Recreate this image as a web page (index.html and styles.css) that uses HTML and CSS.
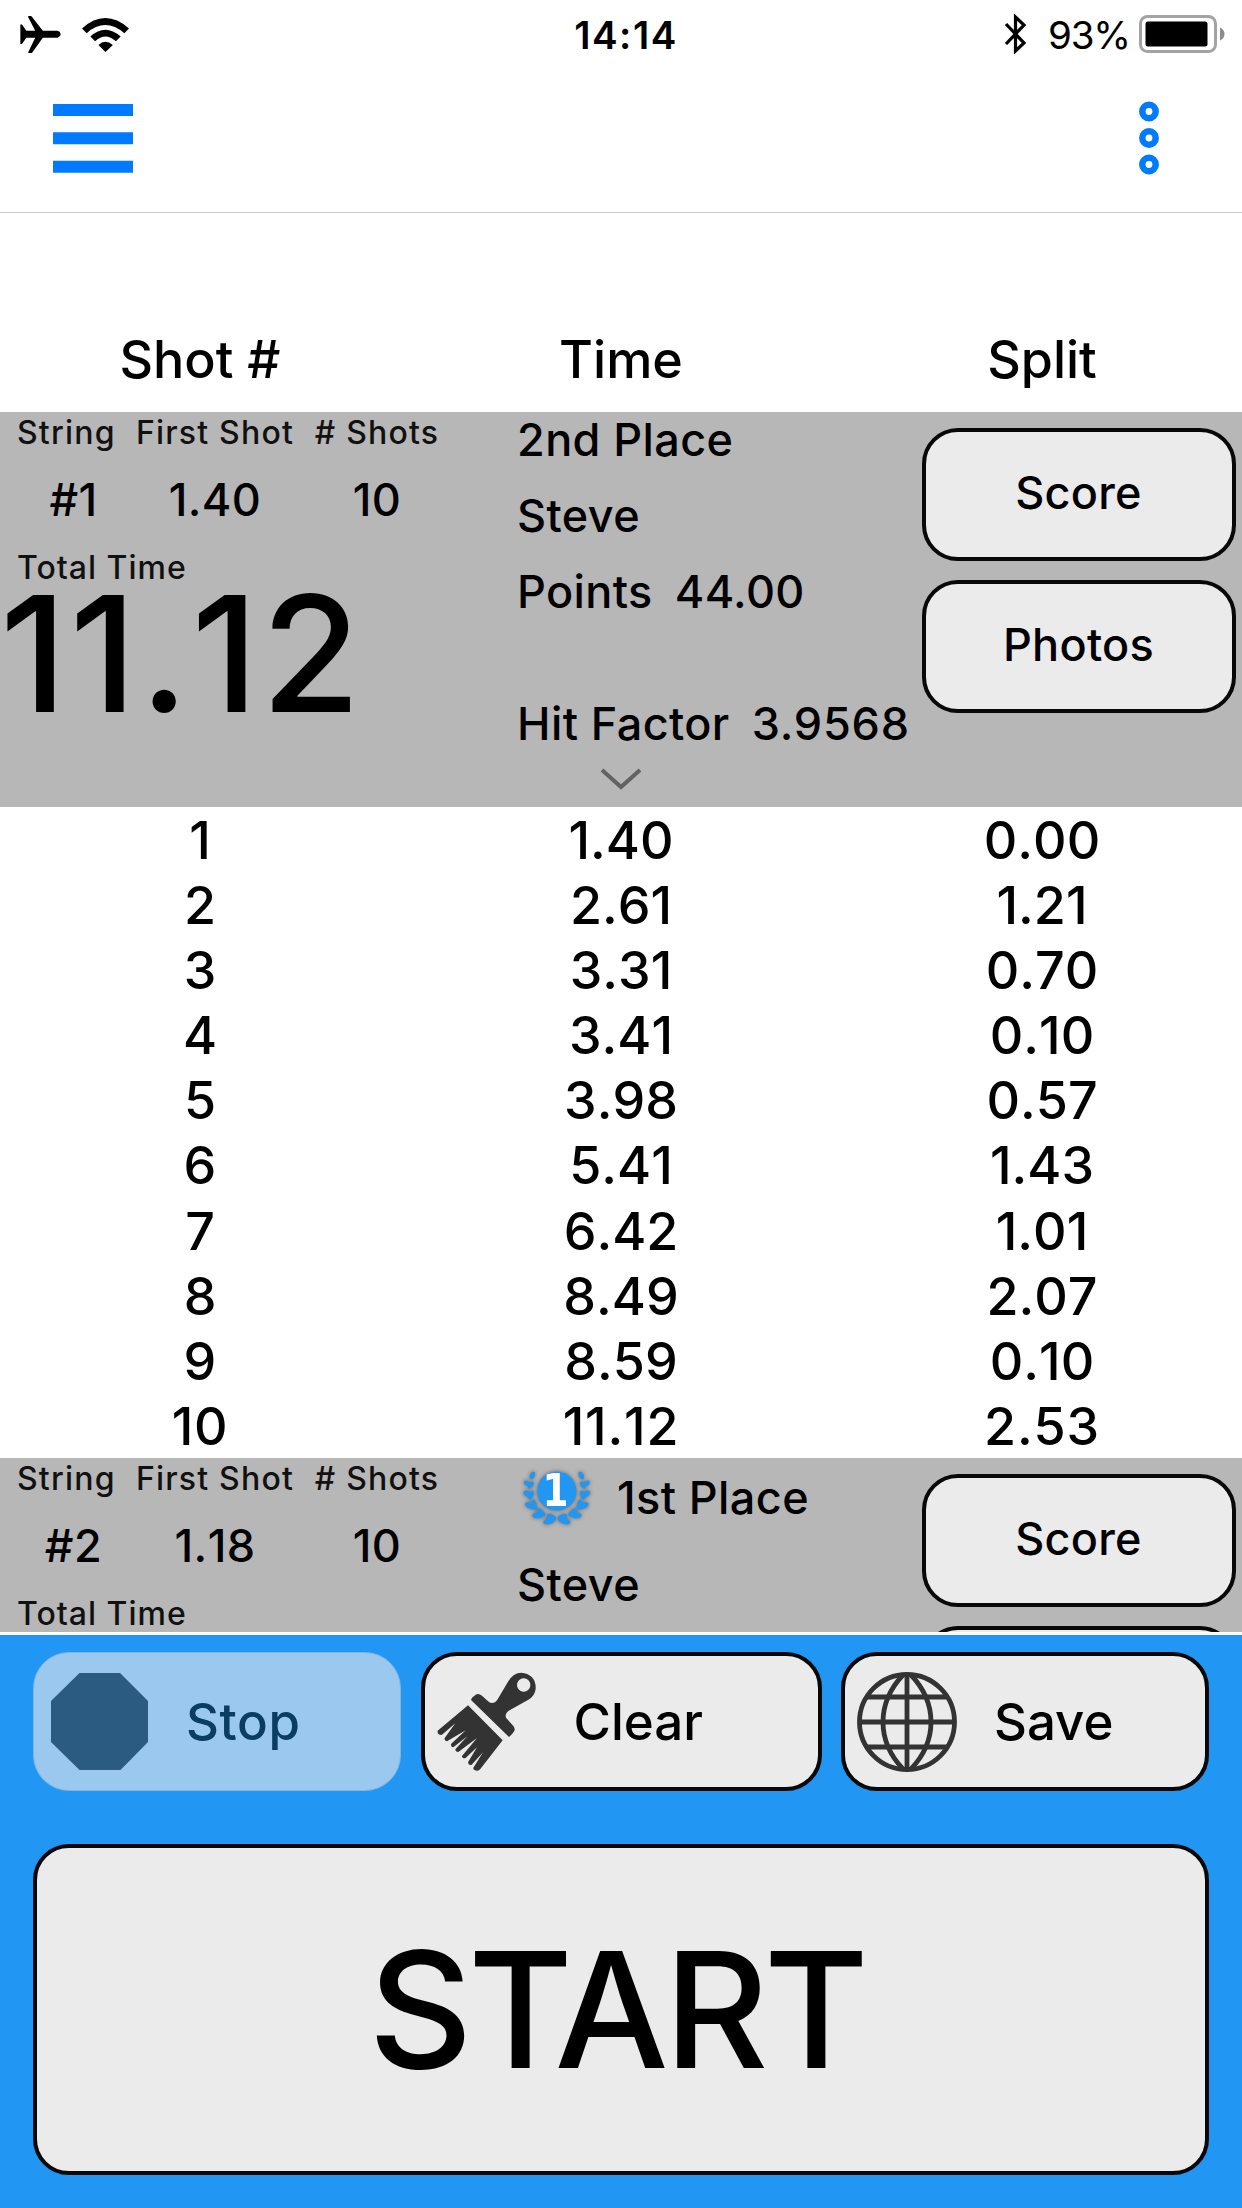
FILE: index.html
```html
<!DOCTYPE html>
<html lang="en">
<head>
  <meta charset="UTF-8">
  <title>Shot Timer</title>
  <link rel="stylesheet" href="styles.css">
</head>
<body>
  <div class="status-bar">
    <div class="status-left">
      <svg class="plane-icon" viewBox="60 44 122 112"><path d="M60 70h5l13 19h27L83 46q0-2 3-2h7l35 45h45q9 3 9 10.500t-9 10.500h-45l-33 46h-9q-3 0-2-3l21-43H78l-13 19h-5z"/></svg>
      <svg class="wifi-icon" viewBox="248 46 140 104"><path d="M248 80Q317 18 388 80L374 94Q317 46 262 94zM273 104Q317 64 363 104L349 118Q317 90 287 118zM297 129Q317 110 340 129L318 150z"/></svg>
    </div>
    <div class="clock">14:14</div>
    <div class="status-right">
      <svg class="bluetooth-icon" viewBox="0 0 23 40"><path d="M2 10L20 29L11.500 37V3L20 11L2 30" fill="none" stroke="#000" stroke-width="3.200"/></svg>
      <span class="percent">93%</span>
      <svg class="battery-icon" viewBox="0 0 87 38"><rect x="1.500" y="1.500" width="75" height="35" rx="7" fill="none" stroke="#a3a3a3" stroke-width="3"/><rect x="6.500" y="6.500" width="62" height="25" rx="2.500"/><path d="M81 12.500q4.500 2 4.500 6.500t-4.500 6.500z" fill="#8c8c8c"/></svg>
    </div>
  </div>

  <div class="nav-bar">
    <svg class="menu-icon" viewBox="0 0 80 69"><path d="M0 0h80v12H0zM0 28.300h80v12H0zM0 56.700h80v12H0z"/></svg>
    <svg class="more-icon" viewBox="0 0 20 74"><circle cx="10" cy="10.500" r="6.700"/><circle cx="10" cy="37" r="6.700"/><circle cx="10" cy="63.500" r="6.700"/></svg>
  </div>

  <div class="row table-head">
    <div>Shot #</div><div>Time</div><div>Split</div>
  </div>

  <div class="list">
    <div class="string-card">
      <div class="summary">
        <div class="summary-grid">
          <div class="label first">String</div><div class="label">First Shot</div><div class="label"># Shots</div>
          <div class="value">#1</div><div class="value">1.40</div><div class="value">10</div>
        </div>
        <div class="label total-label">Total Time</div>
        <div class="total">11.12</div>
      </div>
      <div class="score-info">
        <div class="info-line">2nd Place</div>
        <div class="info-line">Steve</div>
        <div class="info-line">Points<span class="num">44.00</span></div>
        <div class="info-line hit">Hit Factor<span class="num">3.9568</span></div>
        <svg class="chevron" viewBox="0 0 42 22"><path d="M2 2L21 19L40 2" fill="none" stroke="#626262" stroke-width="4"/></svg>
      </div>
      <div class="card-buttons">
        <button>Score</button>
        <button>Photos</button>
      </div>
    </div>

    <div class="shots">
      <div class="row"><div>1</div><div>1.40</div><div>0.00</div></div>
      <div class="row"><div>2</div><div>2.61</div><div>1.21</div></div>
      <div class="row"><div>3</div><div>3.31</div><div>0.70</div></div>
      <div class="row"><div>4</div><div>3.41</div><div>0.10</div></div>
      <div class="row"><div>5</div><div>3.98</div><div>0.57</div></div>
      <div class="row"><div>6</div><div>5.41</div><div>1.43</div></div>
      <div class="row"><div>7</div><div>6.42</div><div>1.01</div></div>
      <div class="row"><div>8</div><div>8.49</div><div>2.07</div></div>
      <div class="row"><div>9</div><div>8.59</div><div>0.10</div></div>
      <div class="row last"><div>10</div><div>11.12</div><div>2.53</div></div>
    </div>

    <div class="string-card">
      <div class="summary">
        <div class="summary-grid">
          <div class="label first">String</div><div class="label">First Shot</div><div class="label"># Shots</div>
          <div class="value">#2</div><div class="value">1.18</div><div class="value">10</div>
        </div>
        <div class="label total-label">Total Time</div>
      </div>
      <div class="score-info">
        <div class="info-line winner">
          <svg class="badge" viewBox="366 88 210 170">
            <defs>
              <g id="laurel">
                <ellipse cx="397" cy="107" rx="7" ry="12" transform="rotate(25 397 107)"/>
                <ellipse cx="383" cy="132" rx="7" ry="13" transform="rotate(-55 383 132)"/>
                <ellipse cx="393" cy="136" rx="6" ry="12" transform="rotate(35 393 136)"/>
                <ellipse cx="384" cy="163" rx="8" ry="15" transform="rotate(-60 384 163)"/>
                <ellipse cx="393" cy="166" rx="7" ry="14" transform="rotate(20 393 166)"/>
                <ellipse cx="392" cy="198" rx="9" ry="18" transform="rotate(-68 392 198)"/>
                <ellipse cx="403" cy="194" rx="7" ry="15" transform="rotate(-15 403 194)"/>
                <ellipse cx="415" cy="226" rx="9" ry="19" transform="rotate(-96 415 226)"/>
                <ellipse cx="423" cy="217" rx="7" ry="16" transform="rotate(-48 423 217)"/>
                <ellipse cx="448" cy="243" rx="9" ry="19" transform="rotate(-108 448 243)"/>
                <ellipse cx="454" cy="232" rx="8" ry="15" transform="rotate(-65 454 232)"/>
              </g>
            </defs>
            <g fill="#2196f3">
              <use href="#laurel"/>
              <use href="#laurel" transform="translate(941 0) scale(-1 1)"/>
              <circle cx="470.500" cy="154" r="59"/>
            </g>
            <text x="0" y="0" transform="translate(467 199) scale(.84 1)">1</text>
          </svg>
          1st Place
        </div>
        <div class="info-line">Steve</div>
      </div>
      <div class="card-buttons">
        <button>Score</button>
        <button></button>
      </div>
    </div>
  </div>

  <div class="controls">
    <div class="actions">
      <button class="stop" disabled>
        <svg class="stop-icon" viewBox="0 0 97 97"><path d="M28.500 0h40.500L97 28v41L69.500 97h-41L0 69V28z"/></svg>
        <span>Stop</span>
      </button>
      <button class="clear">
        <svg class="brush-icon" viewBox="112 695 297 297">
          <path fill-rule="evenodd" d="M217 772L228 763Q237 758 247 766L267 784Q276 791 287 785Q293 780 298 770L325 724Q341 697 365 697Q384 698 397 711Q409 725 408 745Q406 766 386 778L331 809Q314 819 319 832L341 857Q347 865 344 872Q338 882 328 890L214 779zM372 714a20 20 0 1 0 .1 0z"/>
          <path d="M205 795L309 900L242 986Q235 995 223 988Q219 984 223 979L250 936L216 973Q206 976 205 966L232 921L197 954Q187 955 187 947L232 893L176 935Q167 935 167 927L203 888L161 921Q153 920 154 911L198 870L142 903Q133 901 135 893L167 849L126 884Q112 884 114 871z"/>
        </svg>
        <span>Clear</span>
      </button>
      <button class="save">
        <svg class="globe-icon" viewBox="0 0 100 100"><circle cx="50" cy="50" r="47.500"/><path d="M50 2v96M2 50h96M10 25h80M10 75h80"/><path d="M46 3Q26 24 26 50T46 97M54 3Q74 24 74 50T54 97"/></svg>
        <span>Save</span>
      </button>
    </div>
    <button class="start">START</button>
  </div>
</body>
</html>
```

FILE: styles.css
```css
* {
  box-sizing: border-box;
}

body {
  margin: 0;
  width: 1242px;
  height: 2208px;
  overflow: hidden;
  background: #fff;
  color: #000;
  font-family: Inter, "Liberation Sans", sans-serif;
  font-weight: 500;
  display: flex;
  flex-direction: column;
}

svg {
  display: block;
  flex: none;
}

button {
  font: inherit;
  color: #000;
  background: #ebebeb;
  border: 4px solid #080808;
  border-radius: 36px;
  padding: 0;
}

/* status bar */
.status-bar {
  height: 68px;
  padding: 0 16px 0 20px;
  display: grid;
  grid-template-columns: 1fr auto 1fr;
  align-items: center;
}

.status-left {
  display: flex;
  align-items: center;
  gap: 21px;
}

.plane-icon {
  width: 41px;
  height: 37px;
}

.wifi-icon {
  width: 47px;
  height: 35px;
}

.clock {
  font-size: 38.5px;
  font-weight: 600;
  letter-spacing: 1.5px;
  padding: 1px 0 0 6px;
}

.status-right {
  display: flex;
  align-items: center;
  justify-content: flex-end;
  font-size: 38.5px;
  font-weight: 400;
}

.bluetooth-icon {
  width: 23px;
  height: 40px;
}

.percent {
  width: 91px;
  margin-left: 21px;
  padding-top: 1px;
  letter-spacing: -1.2px;
}

.battery-icon {
  width: 87px;
  height: 38px;
}

/* nav bar */
.nav-bar {
  height: 145px;
  padding: 0 83px 4px 53px;
  border-bottom: 1px solid #c8c8c8;
  display: flex;
  justify-content: space-between;
  align-items: center;
}

.menu-icon {
  width: 80px;
  height: 69px;
  fill: #007aff;
}

.more-icon {
  width: 20px;
  height: 74px;
  fill: none;
  stroke: #007aff;
  stroke-width: 6.5;
}

/* shots table */
.row {
  display: grid;
  grid-template-columns: 400px 1fr 400px;
  height: 65.1px;
  line-height: 67px;
  font-size: 52px;
  text-align: center;
}

.shots .row {
  font-kerning: none;
}

.shots .last {
  letter-spacing: 0.8px;
}

.table-head {
  height: 199px;
  line-height: 92px;
  padding-top: 101px;
}

.list {
  height: 1220px;
  overflow: hidden;
}

.shots {
  height: 651px;
}

/* string summary */
.string-card {
  height: 395px;
  background: #b7b7b7;
  display: grid;
  grid-template-columns: 517px 405px 314px;
}

.summary-grid {
  padding-left: 17px;
  display: grid;
  grid-template-columns: 113px 170px 154px;
  text-align: center;
}

.label {
  font-size: 32px;
  line-height: 42px;
  letter-spacing: 1.2px;
  color: #111;
}

.label.first {
  text-align: left;
}

.value {
  font-size: 45px;
  line-height: 91px;
  height: 90px;
  letter-spacing: 0.4px;
  font-kerning: none;
}

.total-label {
  line-height: 47px;
  padding-left: 17px;
  letter-spacing: 1px;
}

.total {
  font-size: 161px;
  line-height: 126px;
  font-kerning: none;
  letter-spacing: 3px;
}

.score-info {
  margin-top: -10px;
  white-space: nowrap;
}

.info-line {
  font-size: 45px;
  line-height: 76px;
  letter-spacing: 0.4px;
}

.num {
  margin-left: 22px;
}

.hit {
  margin-top: 56px;
}

.hit .num {
  letter-spacing: 0.8px;
}

.chevron {
  width: 42px;
  height: 22px;
  margin: 6px 0 0 83px;
}

.winner {
  display: flex;
  align-items: center;
  height: 99px;
}

.badge {
  width: 70px;
  height: 57px;
  margin: 0 25px 0 5px;
  overflow: visible;
  filter: drop-shadow(0 0 2px rgba(0, 0, 0, 0.45));
}

.badge text {
  font-family: "DejaVu Sans", sans-serif;
  font-size: 134px;
  font-weight: 700;
  fill: #fff;
  text-anchor: middle;
}

.card-buttons {
  padding-top: 16px;
  display: flex;
  flex-direction: column;
  gap: 19px;
}

.card-buttons button {
  height: 133px;
  padding: 0 1px 4px 0;
  font-size: 45px;
  letter-spacing: 0.3px;
}

/* bottom controls */
.controls {
  flex: 1;
  margin-top: 3px;
  padding: 17px 33px 33px;
  background: #2196f3;
  display: flex;
  flex-direction: column;
  gap: 53px;
}

.actions {
  height: 139px;
  display: grid;
  grid-template-columns: 368px 401px 368px;
  justify-content: space-between;
}

.actions button {
  display: flex;
  align-items: center;
  font-size: 51px;
}

.actions .stop {
  background: #9ac8ee;
  border: 1px solid #81b5df;
  color: #0b3c62;
  letter-spacing: 0.6px;
}

.stop-icon {
  width: 97px;
  height: 97px;
  margin: 0 38px 0 17px;
  fill: #2b5b80;
}

.brush-icon {
  width: 99px;
  height: 99px;
  margin: 0 38px 0 12px;
  fill: #333;
}

.globe-icon {
  width: 100px;
  height: 100px;
  margin: 0 37px 0 12px;
  fill: none;
  stroke: #333;
  stroke-width: 4.8;
}

.start {
  height: 331px;
  padding-right: 9px;
  font-size: 161px;
  letter-spacing: -4.6px;
}
```
